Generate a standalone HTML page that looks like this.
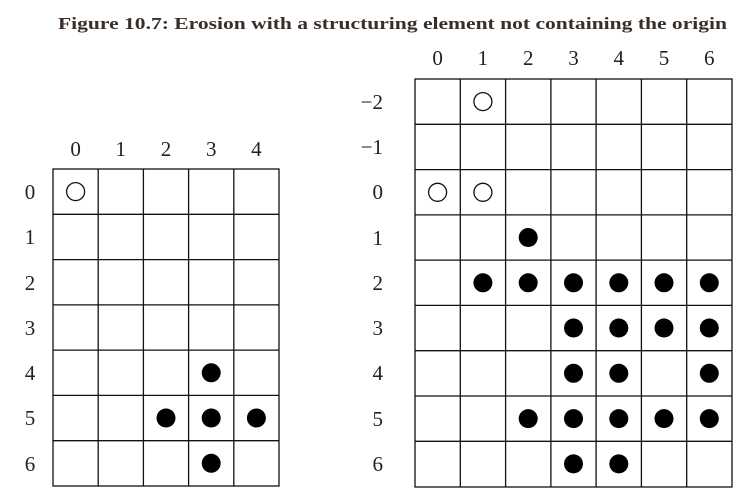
<!DOCTYPE html>
<html><head><meta charset="utf-8"><style>html,body{margin:0;padding:0;background:#fff;}svg{display:block}</style></head>
<body>
<svg width="748" height="501" viewBox="0 0 748 501" xmlns="http://www.w3.org/2000/svg" font-family="Liberation Serif, serif">
<text x="58" y="29" font-size="17" font-weight="bold" fill="#3a2e28" textLength="669" lengthAdjust="spacingAndGlyphs">Figure 10.7: Erosion with a structuring element not containing the origin</text>
<g stroke="#111" stroke-width="1.3" fill="none">
<!-- left grid -->
<rect x="53" y="169" width="226" height="317"/>
<path d="M98.2 169V486M143.4 169V486M188.6 169V486M233.8 169V486M53 214.3H279M53 259.6H279M53 304.9H279M53 350.1H279M53 395.4H279M53 440.7H279"/>
<!-- right grid -->
<rect x="415" y="79" width="317" height="408"/>
<path d="M460.3 79V487M505.6 79V487M550.9 79V487M596.1 79V487M641.4 79V487M686.7 79V487M415 124.3H732M415 169.6H732M415 214.9H732M415 260.1H732M415 305.4H732M415 350.7H732M415 396H732M415 441.3H732"/>
<circle cx="75.6" cy="191.6" r="9"/>
<circle cx="482.9" cy="101.6" r="9"/>
<circle cx="437.6" cy="192.3" r="9"/>
<circle cx="482.9" cy="192.3" r="9"/>
</g>
<g fill="#000">
<circle cx="211.2" cy="372.8" r="9.5"/>
<circle cx="166" cy="418" r="9.5"/><circle cx="211.2" cy="418" r="9.5"/><circle cx="256.4" cy="418" r="9.5"/>
<circle cx="211.2" cy="463.3" r="9.5"/>
<circle cx="528.2" cy="237.5" r="9.5"/>
<circle cx="482.9" cy="282.8" r="9.5"/><circle cx="528.2" cy="282.8" r="9.5"/><circle cx="573.5" cy="282.8" r="9.5"/><circle cx="618.8" cy="282.8" r="9.5"/><circle cx="664" cy="282.8" r="9.5"/><circle cx="709.3" cy="282.8" r="9.5"/>
<circle cx="573.5" cy="328" r="9.5"/><circle cx="618.8" cy="328" r="9.5"/><circle cx="664" cy="328" r="9.5"/><circle cx="709.3" cy="328" r="9.5"/>
<circle cx="573.5" cy="373.3" r="9.5"/><circle cx="618.8" cy="373.3" r="9.5"/><circle cx="709.3" cy="373.3" r="9.5"/>
<circle cx="528.2" cy="418.6" r="9.5"/><circle cx="573.5" cy="418.6" r="9.5"/><circle cx="618.8" cy="418.6" r="9.5"/><circle cx="664" cy="418.6" r="9.5"/><circle cx="709.3" cy="418.6" r="9.5"/>
<circle cx="573.5" cy="463.9" r="9.5"/><circle cx="618.8" cy="463.9" r="9.5"/>
</g>
<g font-size="21" fill="#222" text-anchor="middle">
<text x="75.6" y="156">0</text><text x="120.8" y="156">1</text><text x="166" y="156">2</text><text x="211.2" y="156">3</text><text x="256.4" y="156">4</text>
<text x="30" y="199">0</text><text x="30" y="244">1</text><text x="30" y="290">2</text><text x="30" y="335">3</text><text x="30" y="380">4</text><text x="30" y="425">5</text><text x="30" y="471">6</text>
<text x="437.6" y="65">0</text><text x="482.9" y="65">1</text><text x="528.2" y="65">2</text><text x="573.5" y="65">3</text><text x="618.8" y="65">4</text><text x="664" y="65">5</text><text x="709.3" y="65">6</text>
</g>
<g font-size="21" fill="#222" text-anchor="end">
<text x="383" y="109">−2</text><text x="383" y="154">−1</text><text x="383" y="199">0</text><text x="383" y="245">1</text><text x="383" y="290">2</text><text x="383" y="335">3</text><text x="383" y="380">4</text><text x="383" y="426">5</text><text x="383" y="471">6</text>
</g>
</svg>
</body></html>
